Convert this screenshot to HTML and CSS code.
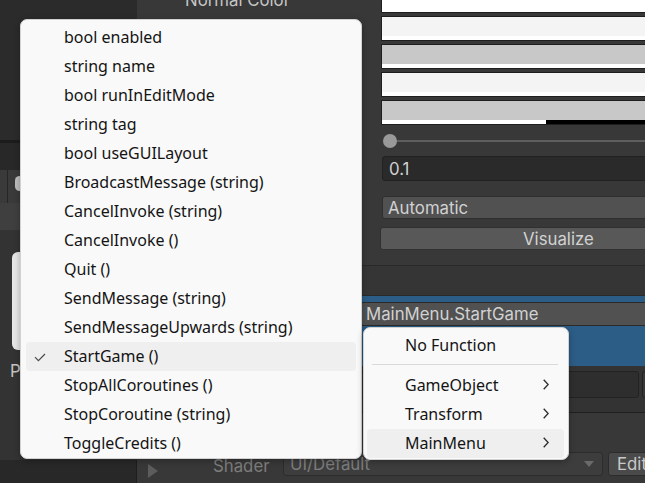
FILE: index.html
```html
<!DOCTYPE html>
<html>
<head>
<meta charset="utf-8">
<link rel="stylesheet" href="styles.css">
</head>
<body>
<div class="editor">
  <aside class="hierarchy">
    <div class="h-top"></div>
    <div class="h-line"></div>
    <div class="h-band"></div>
    <div class="h-toolbar"><span class="h-cell"></span><span class="h-toggle"></span></div>
    <div class="h-tabs"></div>
    <div class="h-body">
      <div class="preview"></div>
      <div class="pi">Pi</div>
    </div>
    <div class="h-bottom"></div>
  </aside>
  <main class="inspector">
    <div class="prop">
      <div class="label">Normal Color</div>
      <div class="swatches">
        <div class="swatch"><span class="sw-color white"></span><span class="sw-stripe"></span></div>
        <div class="swatch"><span class="sw-color light"></span><span class="sw-stripe"></span></div>
        <div class="swatch"><span class="sw-color mid"></span><span class="sw-stripe"></span></div>
        <div class="swatch"><span class="sw-color light"></span><span class="sw-stripe"></span></div>
        <div class="swatch"><span class="sw-color mid"></span><span class="sw-stripe alpha"></span></div>
      </div>
    </div>
    <div class="slider"><span class="knob"></span><span class="track"></span></div>
    <div class="field">0.1</div>
    <div class="dropdown">Automatic</div>
    <div class="button">Visualize</div>
    <div class="list-head"></div>
    <div class="element selected">
      <div class="fn-field">MainMenu.StartGame</div>
    </div>
    <div class="element second">
      <div class="obj-field"></div>
      <div class="obj-field2"></div>
    </div>
    <div class="shader-row">
      <span class="fold"></span>
      <span class="shader-label">Shader</span>
      <span class="shader-drop">UI/Default<span class="drop-arrow"></span></span>
      <span class="edit-btn">Edit</span>
    </div>
  </main>
</div>

<div class="menu main-menu">
  <div class="item">bool enabled</div>
  <div class="item">string name</div>
  <div class="item">bool runInEditMode</div>
  <div class="item">string tag</div>
  <div class="item">bool useGUILayout</div>
  <div class="item">BroadcastMessage (string)</div>
  <div class="item">CancelInvoke (string)</div>
  <div class="item">CancelInvoke ()</div>
  <div class="item">Quit ()</div>
  <div class="item">SendMessage (string)</div>
  <div class="item">SendMessageUpwards (string)</div>
  <div class="item active"><svg class="check" width="12" height="9" viewBox="0 0 12 9"><path d="M1 4.2 L4.4 7.6 L11 1" fill="none" stroke="#4a4a4a" stroke-width="1.2"/></svg>StartGame ()</div>
  <div class="item">StopAllCoroutines ()</div>
  <div class="item">StopCoroutine (string)</div>
  <div class="item">ToggleCredits ()</div>
</div>

<div class="menu sub-menu">
  <div class="item">No Function</div>
  <div class="sep"></div>
  <div class="item">GameObject<svg class="chev" width="6" height="11" viewBox="0 0 6 11"><path d="M0.7 0.7 L5.2 5.5 L0.7 10.3" fill="none" stroke="#2a2a2a" stroke-width="1.3"/></svg></div>
  <div class="item">Transform<svg class="chev" width="6" height="11" viewBox="0 0 6 11"><path d="M0.7 0.7 L5.2 5.5 L0.7 10.3" fill="none" stroke="#2a2a2a" stroke-width="1.3"/></svg></div>
  <div class="item active">MainMenu<svg class="chev" width="6" height="11" viewBox="0 0 6 11"><path d="M0.7 0.7 L5.2 5.5 L0.7 10.3" fill="none" stroke="#2a2a2a" stroke-width="1.3"/></svg></div>
</div>
</body>
</html>
```

FILE: styles.css
```css
body {
  margin: 0;
  width: 645px;
  height: 483px;
  overflow: hidden;
  position: relative;
  background: #383838;
  font-family: Inter, "Noto Sans", sans-serif;
  font-size: 16.8px;
  color: #d2d2d2;
}

.editor {
  display: grid;
  grid-template-columns: 137px 508px;
  height: 483px;
}

/* left panel */
.hierarchy {
  display: flex;
  flex-direction: column;
  background: #333333;
}
.h-top { height: 140px; background: #2b2b2b; }
.h-line { height: 3px; background: #1c1c1c; }
.h-band { height: 27px; background: #282828; }
.h-toolbar {
  height: 33px;
  background: #3a3a3a;
  display: flex;
  align-items: flex-start;
}
.h-cell { width: 7px; height: 33px; border-right: 1px solid #262626; }
.h-toggle {
  width: 9px;
  height: 15px;
  margin: 6px 0 0 7px;
  background: #bdbdbd;
  border-radius: 5px;
}
.h-tabs { height: 27px; background: #3f3f3f; }
.h-body { flex: 1; padding: 22px 0 0 12px; }
.preview {
  width: 120px;
  height: 98px;
  background: #e6e6e6;
  border-radius: 6px;
}
.pi {
  margin: 11px 0 0 -2px;
  color: #c4c4c4;
  line-height: 20px;
}
.h-bottom { height: 23px; background: #282828; border-right: 1px solid #1e1e1e; }

/* inspector */
.inspector {
  display: flex;
  flex-direction: column;
  overflow: hidden;
}
.prop {
  display: grid;
  grid-template-columns: 244px 264px;
}
.label {
  padding-left: 48px;
  margin-top: -10px;
  color: #c4c4c4;
  line-height: 20px;
  white-space: nowrap;
}
.swatches {
  display: flex;
  flex-direction: column;
  gap: 3px;
  margin-top: -12px;
  margin-right: -10px;
}
.swatch {
  height: 25px;
  box-sizing: border-box;
  border: 1px solid #1e1e1e;
  display: flex;
  flex-direction: column;
}
.sw-color { flex: 1; }
.sw-color.white { background: #ffffff; }
.sw-color.light { background: #f4f4f4; }
.sw-color.mid { background: #c8c8c8; }
.sw-stripe { height: 4px; background: #ffffff; }
.sw-stripe.alpha { background: linear-gradient(to right, #ffffff 164px, #000000 164px); }

.slider {
  margin: 9px 0 0 245px;
  height: 14px;
  display: flex;
  align-items: center;
}
.knob {
  width: 14px;
  height: 14px;
  border-radius: 50%;
  background: #999999;
  flex: none;
  margin-left: 1px;
}
.track { flex: 1; height: 2px; background: #5e5e5e; }

.field, .dropdown, .button {
  box-sizing: border-box;
  display: flex;
  align-items: center;
  border-radius: 3px;
  margin-right: -10px;
  white-space: nowrap;
}
.field {
  margin-top: 8px;
  margin-left: 245px;
  height: 25px;
  background: #2a2a2a;
  border: 1px solid #212121;
  padding-left: 6px;
}
.dropdown {
  margin-top: 15px;
  margin-left: 245px;
  height: 23px;
  background: #515151;
  border: 1px solid #2f2f2f;
  padding-left: 5px;
}
.button {
  margin-top: 8px;
  margin-left: 243px;
  height: 23px;
  background: #585858;
  border: 1px solid #303030;
  padding-left: 142px;
}

.list-head {
  margin-top: 15px;
  height: 31px;
  box-sizing: border-box;
  border-top: 1px solid #292929;
  border-bottom: 1px solid #2a2a2a;
  background: #353535;
}
.element { box-sizing: border-box; }
.element.selected {
  height: 70px;
  background: #2c5d87;
  padding-top: 6px;
}
.fn-field {
  height: 24px;
  box-sizing: border-box;
  margin-left: 223px;
  margin-right: -10px;
  background: #515151;
  border: 1px solid #2b2b2b;
  border-radius: 3px;
  padding-left: 5px;
  display: flex;
  align-items: center;
  white-space: nowrap;
}
.element.second {
  height: 47px;
  background: #333333;
  border-bottom: 1px solid #1f1f1f;
  padding-top: 5px;
  display: flex;
  gap: 3px;
}
.obj-field {
  flex: none;
  width: 500px;
  margin-left: 2px;
  height: 27px;
  box-sizing: border-box;
  background: #2e2e2e;
  border: 1px solid #222222;
  border-radius: 3px;
}
.obj-field2 {
  flex: none;
  width: 40px;
  height: 27px;
  box-sizing: border-box;
  background: #383838;
  border: 1px solid #222222;
  border-radius: 3px;
}

.shader-row {
  margin-top: 39px;
  height: 24px;
  display: flex;
  align-items: center;
  white-space: nowrap;
}
.fold {
  flex: none;
  width: 0;
  height: 0;
  margin: 13px 0 0 11px;
  border-top: 7px solid transparent;
  border-bottom: 7px solid transparent;
  border-left: 10px solid #5c5c5c;
}
.shader-label {
  flex: none;
  margin-left: 55px;
  width: 70px;
  color: #7d7d7d;
  padding-top: 3px;
}
.shader-drop {
  flex: none;
  width: 320px;
  height: 24px;
  box-sizing: border-box;
  background: #3d3d3d;
  border: 1px solid #2c2c2c;
  border-radius: 3px;
  padding-left: 6px;
  display: flex;
  align-items: center;
  color: #7d7d7d;
}
.drop-arrow {
  margin-left: auto;
  margin-right: 8px;
  width: 0;
  height: 0;
  border-left: 5px solid transparent;
  border-right: 5px solid transparent;
  border-top: 6px solid #6a6a6a;
}
.edit-btn {
  flex: none;
  margin-left: 5px;
  width: 60px;
  height: 24px;
  box-sizing: border-box;
  background: #4a4a4a;
  border: 1px solid #2c2c2c;
  border-radius: 3px;
  padding-left: 8px;
  display: flex;
  align-items: center;
  color: #c8c8c8;
}

/* menus */
.menu {
  position: absolute;
  box-sizing: border-box;
  background: #f9f9f9;
  border: 1px solid #d2d2d2;
  border-radius: 7px;
  box-shadow: 0 2px 6px rgba(0, 0, 0, 0.28);
  font-family: "Noto Sans", "Open Sans", sans-serif;
  font-size: 16px;
  color: #141414;
}
.main-menu {
  left: 20px;
  top: 19px;
  width: 342px;
  padding: 3px 5px 0 5px;
}
.sub-menu {
  left: 363px;
  top: 327px;
  width: 206px;
  padding: 3px 4px 1px 3px;
}
.item {
  height: 29px;
  box-sizing: border-box;
  padding-bottom: 2px;
  display: flex;
  align-items: center;
  padding-left: 38px;
  border-radius: 4px;
  position: relative;
  white-space: nowrap;
}
.item.active { background: #efefef; }
.check {
  position: absolute;
  left: 8px;
  top: 11px;
}
.chev {
  margin-left: auto;
  margin-right: 15px;
}
.sep {
  height: 11px;
  margin: 0 6px 0 5px;
  background: linear-gradient(#d9d9d9, #d9d9d9) 0 4px / 100% 1px no-repeat;
}
```
